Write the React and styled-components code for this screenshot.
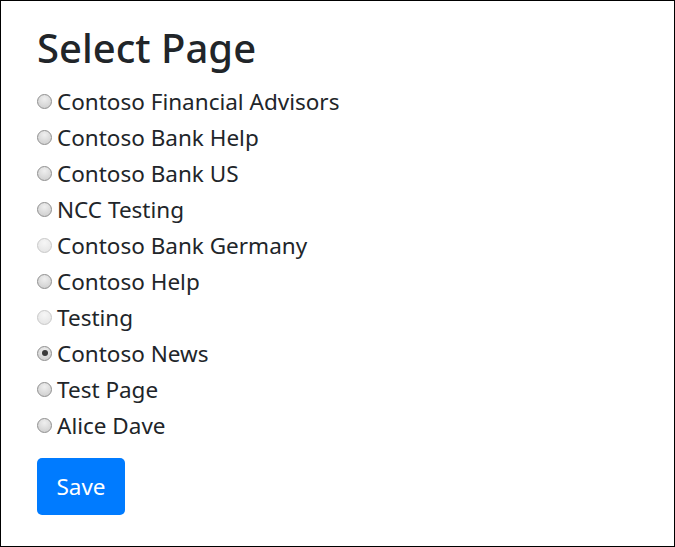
import React from "react";
import styled, { createGlobalStyle } from "styled-components";

const Global = createGlobalStyle`
  html, body { margin: 0; padding: 0; background: #fff; }
  body { font-family: "Noto Sans", "Open Sans", sans-serif; color: #212529; }
`;

const Frame = styled.div`
  box-sizing: border-box;
  width: 675px;
  height: 547px;
  border: 1px solid #000;
  padding: 22px 36px 0 36px;
  display: flex;
  flex-direction: column;
`;

const Title = styled.h1`
  margin: 0 0 10px 0;
  font-size: 40px;
  font-weight: 500;
  line-height: 50px;
  color: #212529;
`;

const List = styled.div`
  display: flex;
  flex-direction: column;
`;

const Row = styled.label`
  display: flex;
  align-items: center;
  height: 36px;
  font-size: 22.5px;
  color: #212529;
  white-space: nowrap;
`;

const Radio = styled.span`
  box-sizing: border-box;
  width: 15px;
  height: 15px;
  border-radius: 50%;
  margin-right: 5px;
  flex: none;
  position: relative;
  border: 1px solid ${(p) => (p.$disabled ? "#c8c8c8" : "#8f8f8f")};
  background: ${(p) =>
    p.$disabled
      ? "radial-gradient(circle at 50% 30%, #f6f6f6, #e2e2e2)"
      : "radial-gradient(circle at 50% 30%, #efefef, #cacaca)"};
  &::after {
    content: "";
    display: ${(p) => (p.$checked ? "block" : "none")};
    position: absolute;
    left: 3.5px;
    top: 3.5px;
    width: 6px;
    height: 6px;
    border-radius: 50%;
    background: #3a3a3a;
  }
`;

const SaveButton = styled.button`
  margin-top: 15px;
  width: 88px;
  height: 57px;
  border: none;
  border-radius: 5px;
  background: #007bff;
  color: #fff;
  font-family: "Noto Sans", "Open Sans", sans-serif;
  font-size: 22.5px;
  padding: 0;
  cursor: pointer;
`;

const pages = [
  { name: "Contoso Financial Advisors" },
  { name: "Contoso Bank Help" },
  { name: "Contoso Bank US" },
  { name: "NCC Testing" },
  { name: "Contoso Bank Germany", disabled: true },
  { name: "Contoso Help" },
  { name: "Testing", disabled: true },
  { name: "Contoso News", checked: true },
  { name: "Test Page" },
  { name: "Alice Dave" },
];

export default function App() {
  return (
    <>
      <Global />
      <Frame>
        <Title>Select Page</Title>
        <List>
          {pages.map((p) => (
            <Row key={p.name}>
              <Radio $checked={p.checked} $disabled={p.disabled} />
              {p.name}
            </Row>
          ))}
        </List>
        <div>
          <SaveButton>Save</SaveButton>
        </div>
      </Frame>
    </>
  );
}
